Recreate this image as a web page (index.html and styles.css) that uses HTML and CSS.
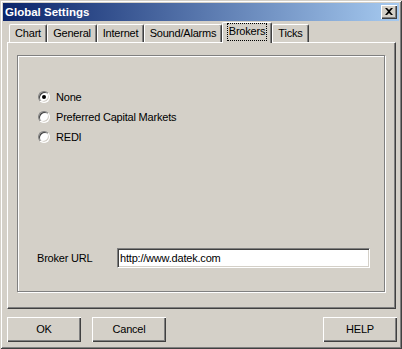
FILE: index.html
```html
<!DOCTYPE html>
<html>
<head>
<meta charset="utf-8">
<link rel="stylesheet" href="styles.css">
</head>
<body>
<div class="window">
  <div class="titlebar">
    <span class="title">Global Settings</span>
    <span class="close"><svg width="8" height="7" viewBox="0 0 8 7"><path d="M0 0h2l2 2 2-2h2L5 3.5 8 7H6L4 5 2 7H0l3-3.5z" fill="#000"/></svg></span>
  </div>
  <div class="tabs">
    <div class="tab t-chart">Chart</div>
    <div class="tab t-general">General</div>
    <div class="tab t-internet">Internet</div>
    <div class="tab t-sound">Sound/Alarms</div>
    <div class="tab active t-brokers"><span class="focus">Brokers</span></div>
    <div class="tab t-ticks">Ticks</div>
  </div>
  <div class="panel">
    <div class="group">
      <div class="radios">
        <label class="radio"><span class="rbox checked"><span class="dot"></span></span><span>None</span></label>
        <label class="radio"><span class="rbox"></span><span>Preferred Capital Markets</span></label>
        <label class="radio"><span class="rbox"></span><span>REDI</span></label>
      </div>
      <div class="url-row">
        <span class="url-label">Broker URL</span>
        <div class="input">http://www.datek.com</div>
      </div>
    </div>
  </div>
  <div class="buttons">
    <div class="btn">OK</div>
    <div class="btn">Cancel</div>
    <div class="spacer"></div>
    <div class="btn">HELP</div>
  </div>
</div>
</body>
</html>
```
FILE: styles.css
```css
* { box-sizing: border-box; }
html, body { margin: 0; padding: 0; }
body {
  width: 402px;
  height: 349px;
  background: #d4d0c8;
  font-family: "Liberation Sans", Arial, sans-serif;
  font-size: 11px;
  letter-spacing: -0.2px;
  color: #000;
}
.window {
  width: 402px;
  height: 349px;
  padding: 3px;
  background: #d4d0c8;
  box-shadow: inset 1px 1px 0 #d4d0c8, inset -1px -1px 0 #404040, inset 2px 2px 0 #fff, inset -2px -2px 0 #808080;
  display: flex;
  flex-direction: column;
}
.titlebar {
  height: 18px;
  background: linear-gradient(to right, #0a246a, #a6caf0);
  display: flex;
  align-items: center;
  justify-content: space-between;
  padding: 0 2px 0 2px;
}
.title {
  color: #fff;
  font-weight: bold;
  font-size: 11.5px;
  letter-spacing: 0;
}
.close {
  width: 16px;
  height: 14px;
  background: #d4d0c8;
  box-shadow: inset 1px 1px 0 #fff, inset -1px -1px 0 #404040, inset -2px -2px 0 #808080;
  display: flex;
  align-items: center;
  justify-content: center;
  padding-bottom: 1px;
}
.tabs {
  margin-top: 1px;
  height: 20px;
  display: flex;
  align-items: flex-end;
  padding-left: 6px;
  position: relative;
  z-index: 1;
}
.tab {
  height: 18px;
  display: flex;
  align-items: center;
  justify-content: center;
  padding-bottom: 1px;
  border-top: 1px solid #fff;
  border-left: 1px solid #fff;
  border-right: 1px solid #404040;
  border-top-left-radius: 2px;
  border-top-right-radius: 2px;
  box-shadow: inset -1px 0 0 #808080;
}
.t-chart { width: 38px; }
.t-general { width: 50px; }
.t-internet { width: 47px; }
.t-sound { width: 78px; }
.t-brokers { width: 50px; }
.t-ticks { width: 37px; }
.tab.active {
  height: 21px;
  margin-bottom: -1px;
  background: #d4d0c8;
  padding-bottom: 3px;
}
.focus {
  outline: 1px dotted #000;
  outline-offset: 0;
  padding: 1px 1px 2px 1px;
  line-height: 13px;
}
.panel {
  margin: 0 3px 0 4px;
  height: 267px;
  border-top: 1px solid #fff;
  border-left: 1px solid #fff;
  border-right: 1px solid #404040;
  border-bottom: 1px solid #404040;
  box-shadow: inset -1px -1px 0 #808080;
  padding: 12px 9px 15px 9px;
  display: flex;
}
.group {
  flex: 1;
  border: 1px solid #808080;
  box-shadow: inset 1px 1px 0 #fff, 1px 1px 0 #fff;
  margin-right: 1px;
  margin-bottom: 1px;
  display: flex;
  flex-direction: column;
  justify-content: space-between;
  padding: 34px 0 23px 19px;
}
.radios {
  display: flex;
  flex-direction: column;
  gap: 7px;
}
.radio {
  display: flex;
  align-items: center;
  gap: 6px;
  height: 13px;
  padding-left: 1px;
}
.rbox {
  width: 12px;
  height: 12px;
  border-radius: 50%;
  border: 1px solid;
  border-color: #808080 #fff #fff #808080;
  background: #fff;
  box-shadow: inset 1px 1px 0 #404040, inset -1px -1px 0 #d4d0c8;
  display: flex;
  align-items: center;
  justify-content: center;
}
.dot {
  width: 4px;
  height: 4px;
  border-radius: 50%;
  background: #000;
}
.url-row {
  display: flex;
  align-items: center;
}
.url-label {
  width: 80px;
}
.input {
  width: 253px;
  height: 20px;
  background: #fff;
  border: 1px solid;
  border-color: #808080 #fff #fff #808080;
  box-shadow: inset 1px 1px 0 #404040, inset -1px -1px 0 #d4d0c8;
  padding: 0 3px 1px 2px;
  display: flex;
  align-items: center;
}
.buttons {
  margin: 8px 2px 0 4px;
  display: flex;
}
.buttons .btn + .btn { margin-left: 11px; }
.spacer { flex: 1; }
.btn {
  width: 74px;
  height: 25px;
  background: #d4d0c8;
  box-shadow: inset 1px 1px 0 #fff, inset -1px -1px 0 #404040, inset -2px -2px 0 #808080;
  display: flex;
  align-items: center;
  justify-content: center;
  padding-bottom: 1px;
}
```
